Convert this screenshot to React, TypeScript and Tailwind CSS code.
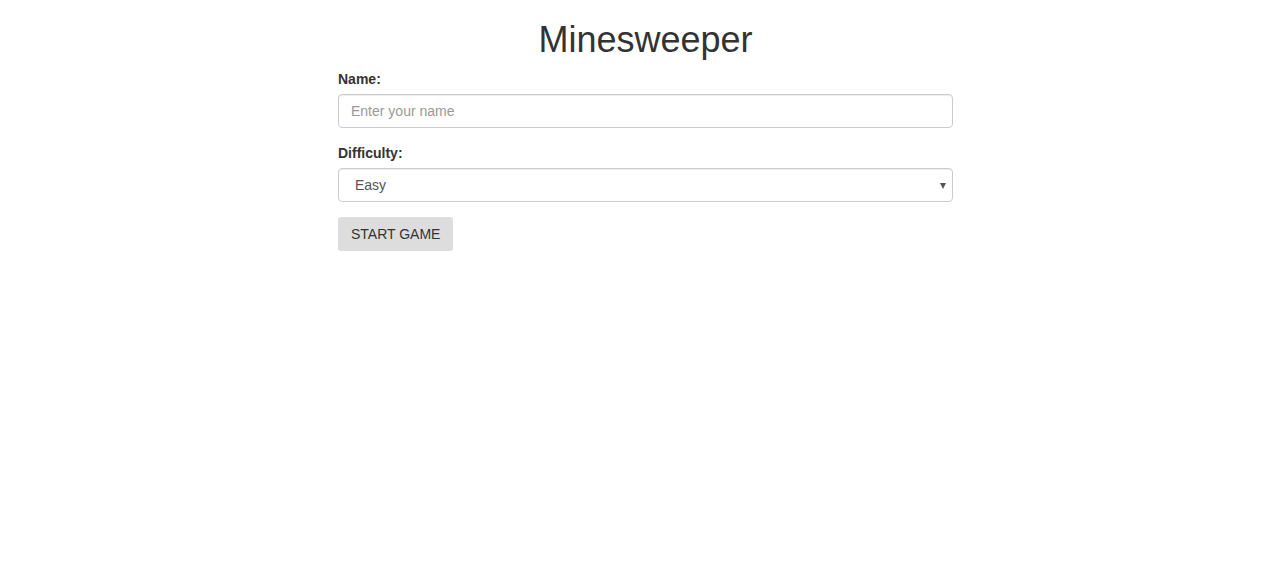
import { useState } from "react";

const fieldClass =
  "block h-[34px] w-full rounded-[4px] border border-[#ccc] bg-white text-[14px] leading-[20px] text-[#555] shadow-[inset_0_1px_1px_rgba(0,0,0,0.075)] outline-none";

export default function App() {
  const [name, setName] = useState("");
  const [difficulty, setDifficulty] = useState("easy");

  return (
    <div className="min-h-[570px] bg-white font-['Liberation_Sans',Arial,sans-serif] text-[14px] leading-[20px] text-[#333]">
      <div className="mx-auto w-[630px] pl-[15px]">
        <h1 className="mt-[20px] mb-[9px] text-center text-[36px] leading-[39.6px] font-normal">
          Minesweeper
        </h1>

        <div className="mb-[15px]">
          <label htmlFor="name" className="mb-[5px] block font-bold">
            Name:
          </label>
          <input
            id="name"
            type="text"
            value={name}
            onChange={(event) => setName(event.target.value)}
            placeholder="Enter your name"
            className={`${fieldClass} px-[12px] py-[6px] placeholder:text-[#999]`}
          />
        </div>

        <div className="mb-[15px]">
          <label htmlFor="difficulty" className="mb-[5px] block font-bold">
            Difficulty:
          </label>
          <div className="relative">
            <select
              id="difficulty"
              value={difficulty}
              onChange={(event) => setDifficulty(event.target.value)}
              className={`${fieldClass} appearance-none pr-[24px] pl-[16px]`}
            >
              <option value="easy">Easy</option>
              <option value="medium">Medium</option>
              <option value="hard">Hard</option>
            </select>
            <svg
              className="pointer-events-none absolute top-[15px] right-[7px]"
              width="6"
              height="6"
              viewBox="0 0 6 6"
            >
              <path d="M0 0 L6 0 L3 6 Z" fill="#555" />
            </svg>
          </div>
        </div>

        <button
          type="button"
          className="h-[34px] rounded-[3px] bg-[#ddd] px-[13px] text-[14px] leading-[20px] text-[#333]"
        >
          START GAME
        </button>
      </div>
    </div>
  );
}
